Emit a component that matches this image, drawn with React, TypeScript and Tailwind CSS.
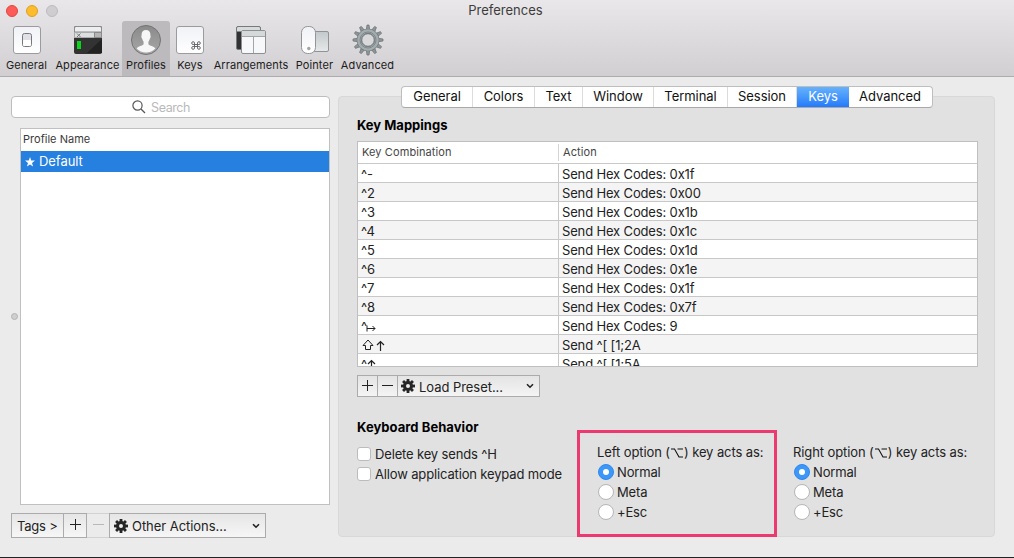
import type { ReactNode } from "react";
import clsx from "clsx";

const KeyGradient = ({ id }: { id: string }) => (
  <linearGradient id={id} x1="0" y1="0" x2="0" y2="1">
    <stop offset="0" stopColor="#f0f2f6" />
    <stop offset="1" stopColor="#ffffff" />
  </linearGradient>
);

const GeneralIcon = () => (
  <svg width="30" height="30" viewBox="0 0 30 30">
    <defs><KeyGradient id="general" /></defs>
    <rect x="1.5" y="1.5" width="27" height="27" rx="2.5" fill="url(#general)" stroke="#9b9b9d" />
    <rect x="10.5" y="8.5" width="9" height="13" rx="2" fill="#dfe1e6" stroke="#77777b" />
    <rect x="11" y="15" width="8" height="6" rx="1" fill="#fff" />
  </svg>
);

const AppearanceIcon = () => (
  <svg width="30" height="30" viewBox="0 0 30 30">
    <rect x="1" y="1" width="28" height="28" rx="2" fill="#333" />
    <path d="M1.5 7V3A1.5 1.5 0 0 1 3 1.5h24A1.5 1.5 0 0 1 28.5 3v4z" fill="#eceef0" stroke="#8c8c8e" />
    <rect x="1.5" y="7.5" width="20" height="5" fill="#dcdfe0" stroke="#a9abac" />
    <rect x="21.5" y="7.5" width="7" height="5" fill="#b3b5b6" stroke="#8a8a8a" />
    <path d="M4 8.500l3.500 3.500M7.500 8.500L4 12" stroke="#777" />
    <rect x="4" y="16" width="4" height="8" fill="#0bd51b" />
    <path d="M29 14v14H14z" fill="#222" />
  </svg>
);

const ProfilesIcon = () => (
  <svg width="32" height="32" viewBox="0 0 32 32">
    <defs>
      <linearGradient id="disc" x1="0" y1="0" x2="0" y2="1">
        <stop offset="0" stopColor="#8a8a8a" />
        <stop offset="1" stopColor="#a8a8a8" />
      </linearGradient>
    </defs>
    <circle cx="16" cy="16" r="14.500" fill="url(#disc)" stroke="#747474" />
    <path
      d="M16 6c-3 0-4.600 2-4.400 5 0 1-.4 1.200-.2 2.200.2 1 .7 1.100.9 1.800.3 1.400.8 2 1.300 2.600v2.600c-1 1.600-5.500 1.700-7 4.300a13 13 0 0 0 18.800 0c-1.500-2.600-6-2.700-7-4.300v-2.600c.5-.6 1-1.200 1.300-2.600.2-.7.7-.8.9-1.800.2-1-.2-1.200-.2-2.200.2-3-1.400-5-4.400-5z"
      fill="#f7f7f7"
    />
  </svg>
);

const KeysIcon = () => (
  <svg width="30" height="30" viewBox="0 0 30 30">
    <defs><KeyGradient id="keys" /></defs>
    <rect x="1.5" y="1.5" width="27" height="27" rx="2.5" fill="url(#keys)" stroke="#9b9b9d" />
    <path
      d="M19.500 19.500v-1.400a1.400 1.400 0 1 0-1.400 1.400h5.800a1.400 1.400 0 1 0-1.400-1.400v4.800a1.400 1.400 0 1 0 1.400-1.400h-5.800a1.400 1.400 0 1 0 1.400 1.400z"
      fill="none"
      stroke="#68686b"
    />
  </svg>
);

const ArrangementsIcon = () => (
  <svg width="32" height="30" viewBox="0 0 32 30">
    <rect x="1.5" y="1.5" width="24" height="23" rx="1.5" fill="#303234" stroke="#77797b" />
    <path d="M2 6.500V3a1 1 0 0 1 1-1h21a1 1 0 0 1 1 1v3.500z" fill="#d8dbdc" />
    <rect x="6.500" y="5.500" width="24" height="23" rx="1.500" fill="#f7f8fa" stroke="#8d8f91" />
    <path d="M7 11V7a1 1 0 0 1 1-1h21a1 1 0 0 1 1 1v4z" fill="#d5d9da" />
    <path d="M7 11.500h23M18.500 12v16" stroke="#a3a6a8" />
  </svg>
);

const PointerIcon = () => (
  <svg width="30" height="30" viewBox="0 0 30 30">
    <defs>
      <KeyGradient id="mouse" />
      <linearGradient id="pad" x1="0" y1="0" x2="0" y2="1">
        <stop offset="0" stopColor="#c3c8ca" />
        <stop offset="1" stopColor="#e6e9ea" />
      </linearGradient>
    </defs>
    <rect x="13.500" y="6.500" width="15" height="20" rx="1.500" fill="url(#pad)" stroke="#8f9396" />
    <rect x="1.500" y="1.500" width="14" height="27" rx="6" fill="url(#mouse)" stroke="#929496" />
    <circle cx="8.800" cy="23.500" r="1.700" fill="#a2a4a6" />
  </svg>
);

const teeth = [0, 30, 60, 90, 120, 150, 180, 210, 240, 270, 300, 330];

const AdvancedIcon = () => (
  <svg width="32" height="32" viewBox="0 0 32 32">
    {teeth.map((a) => (
      <path key={a} d="M14.300 5.500L15 1h2l.7 4.500z" fill="#8f9698" stroke="#707779" strokeWidth="0.800" transform={`rotate(${a} 16 16)`} />
    ))}
    <circle cx="16" cy="16" r="8.800" fill="none" stroke="#737b7d" strokeWidth="5" />
    <circle cx="16" cy="16" r="8.800" fill="none" stroke="#a3acae" strokeWidth="3.800" />
    <circle cx="16" cy="16" r="8" fill="none" stroke="#7f888a" strokeWidth="1" />
    <circle cx="16" cy="16" r="6.300" fill="#d9d9dc" stroke="#6c7375" />
  </svg>
);

const GearGlyph = () => (
  <svg width="14" height="14" viewBox="0 0 14 14" className="shrink-0">
    {[0, 45, 90, 135, 180, 225, 270, 315].map((a) => (
      <rect key={a} x="5.600" y="0" width="2.800" height="4" fill="#262626" transform={`rotate(${a} 7 7)`} />
    ))}
    <circle cx="7" cy="7" r="3.500" fill="none" stroke="#262626" strokeWidth="3" />
  </svg>
);

const Chevron = () => (
  <svg width="8" height="6" viewBox="0 0 8 6" className="ml-auto shrink-0">
    <path d="M1 1.200l3 3 3-3" fill="none" stroke="#222" strokeWidth="1.600" />
  </svg>
);

const Plus = () => (
  <svg width="11" height="11" viewBox="0 0 11 11">
    <path d="M5.500 0v11M0 5.500h11" stroke="#222" />
  </svg>
);

const Minus = ({ color = "#222" }: { color?: string }) => (
  <svg width="11" height="11" viewBox="0 0 11 11">
    <path d="M0 5.500h11" stroke={color} />
  </svg>
);

const toolbar = [
  { label: "General", width: "w-[53px]", icon: <GeneralIcon /> },
  { label: "Appearance", width: "w-[69px]", icon: <AppearanceIcon /> },
  { label: "Profiles", width: "w-12", icon: <ProfilesIcon />, active: true },
  { label: "Keys", width: "w-10", icon: <KeysIcon /> },
  { label: "Arrangements", width: "w-[82px]", icon: <ArrangementsIcon /> },
  { label: "Pointer", width: "w-[45px]", icon: <PointerIcon /> },
  { label: "Advanced", width: "w-[61px]", icon: <AdvancedIcon /> },
];

const tabs = [
  { label: "General", width: "w-[71px]" },
  { label: "Colors", width: "w-[62px]" },
  { label: "Text", width: "w-12" },
  { label: "Window", width: "w-[71px]" },
  { label: "Terminal", width: "w-[74px]" },
  { label: "Session", width: "w-[69px]" },
  { label: "Keys", width: "w-[52px]", active: true },
  { label: "Advanced", width: "w-[82px]" },
];

const Shift = () => (
  <svg width="12" height="12" viewBox="0 0 12 12" className="mr-0.5 ml-px">
    <path d="M6 1l5 5.500H8.500v4h-5v-4H1z" fill="none" stroke="#222" />
  </svg>
);

const Up = () => (
  <svg width="9" height="11" viewBox="0 0 9 11">
    <path d="M4.500 11V1.500M1 5l3.500-3.500L8 5" fill="none" stroke="#222" strokeWidth="1.200" />
  </svg>
);

const TabKey = () => (
  <svg width="10" height="7" viewBox="0 0 10 7" className="mt-1 -ml-px">
    <path d="M1 .5v6M1 3.500h8M6.500 1L9 3.500 6.500 6" fill="none" stroke="#222" />
  </svg>
);

const mappings: { keys: ReactNode; action: string }[] = [
  { keys: "^-", action: "Send Hex Codes: 0x1f" },
  { keys: "^2", action: "Send Hex Codes: 0x00" },
  { keys: "^3", action: "Send Hex Codes: 0x1b" },
  { keys: "^4", action: "Send Hex Codes: 0x1c" },
  { keys: "^5", action: "Send Hex Codes: 0x1d" },
  { keys: "^6", action: "Send Hex Codes: 0x1e" },
  { keys: "^7", action: "Send Hex Codes: 0x1f" },
  { keys: "^8", action: "Send Hex Codes: 0x7f" },
  { keys: <>^<TabKey /></>, action: "Send Hex Codes: 9" },
  { keys: <><Shift /><Up /></>, action: "Send ^[ [1;2A" },
  { keys: <>^<Up /></>, action: "Send ^[ [1;5A" },
];

const Toolbar = () => (
  <header className="h-[77px] border-b border-[#aeacae] bg-linear-to-b from-[#e9e7e9] to-[#d1cfd1]">
    <div className="grid h-[21px] grid-cols-[1fr_auto_1fr] items-center">
      <div className="flex gap-2 pl-1.5">
        <span className="size-3 rounded-full border border-[#e2463f] bg-[#fc5b57]" />
        <span className="size-3 rounded-full border border-[#dfa023] bg-[#fdbc2e]" />
        <span className="size-3 rounded-full border border-[#bdbbbd] bg-[#cfcdcf]" />
      </div>
      <h1 className="pr-[3px] pb-px text-[13px] leading-[19px] text-[#3c3c3c]">Preferences</h1>
    </div>
    <nav className="flex h-[55px]">
      {toolbar.map((t) => (
        <div key={t.label} className={clsx("flex flex-col items-center", t.width, t.active && "rounded-t-[3px] bg-[#bcbabc]")}>
          <div className="flex h-[38px] items-center justify-center">{t.icon}</div>
          <span className="text-[11px] leading-[13px] tracking-[0.08px] whitespace-nowrap text-[#1c1c1c]">{t.label}</span>
        </div>
      ))}
    </nav>
  </header>
);

const ProfileList = () => (
  <aside className="w-[330px] pt-[19px] pl-[11px]">
    <div className="flex h-[22px] items-center justify-center rounded border border-[#bdbdbd] bg-white pr-[19px] text-[12.5px] tracking-[-0.45px] text-[#b9b9b9]">
      <svg width="14" height="14" viewBox="0 0 14 14" className="mr-[5px]">
        <circle cx="5.500" cy="5.500" r="4.600" fill="none" stroke="#555" strokeWidth="1.200" />
        <path d="M9 9l4 4" stroke="#555" strokeWidth="1.300" />
      </svg>
      <span className="pt-0.5">Search</span>
    </div>
    <div className="mt-[10px] flex">
      <div className="flex w-[9px] items-center">
        <span className="size-[7px] rounded-full border border-[#b3b3b3] bg-[#cfcfcf]" />
      </div>
      <div className="h-[377px] flex-1 border border-[#c0c0c0] bg-white">
        <div className="h-[22px] pl-0.5 text-[11px] leading-[21px] tracking-[0.02px] text-[#3a3a3a]">Profile Name</div>
        <div className="h-[21px] bg-[#2680df] pl-1 text-[13px] leading-[21px] tracking-[-0.05px] text-white">
          <svg width="10" height="10" viewBox="0 0 10 10" className="mr-1 inline-block align-[-1px]">
            <path d="M5 0l1.250 3.600H10L7 5.900 8.100 9.600 5 7.400 1.900 9.600 3 5.900 0 3.600h3.750z" fill="#fff" />
          </svg>
          Default
        </div>
      </div>
    </div>
    <div className="mt-2 flex h-[25px] text-[13px] tracking-[-0.05px] text-[#222]">
      <div className="flex w-[53px] items-center border border-[#ababab] bg-linear-to-b from-[#e6e6e6] to-[#f6f6f6] pt-0.5 pl-[5px] tracking-[-0.2px] whitespace-nowrap">
        Tags &gt;
      </div>
      <div className="flex w-[23px] items-center justify-center border-y border-r border-[#ababab] bg-linear-to-b from-[#e6e6e6] to-[#f6f6f6] pb-0.5"><Plus /></div>
      <div className="flex w-[22px] items-center justify-center border-y border-[#d2d2d2] pb-0.5"><Minus color="#b8b8b8" /></div>
      <div className="flex w-[157px] items-center border border-[#ababab] bg-linear-to-b from-[#e6e6e6] to-[#f6f6f6] pr-[5px] pl-1 whitespace-nowrap">
        <GearGlyph />
        <span className="ml-1 pt-0.5">Other Actions...</span>
        <Chevron />
      </div>
    </div>
  </aside>
);

const KeyMappings = () => (
  <section className="pl-[18px]">
    <h2 className="h-[33px] pt-[9px] text-[13px] leading-4 font-bold text-black">Key Mappings</h2>
    <div className="h-[226px] w-[621px] overflow-hidden border border-[#bfbfbf] bg-white">
      <div className="flex h-[22px] border-b border-[#cacaca] text-[11px] tracking-[0.1px] text-[#444]">
        <div className="my-0.5 w-[201px] border-r border-[#d4d4d4] pl-1 leading-[17px]">Key Combination</div>
        <div className="pl-1 leading-[21px]">Action</div>
      </div>
      {mappings.map((m, i) => (
        <div key={i} className={clsx("flex h-[19px] border-b border-[#c8c8c8] text-[13px] leading-[21px] tracking-[-0.15px] text-[#222]", i % 2 === 1 && "bg-[#f4f4f4]")}>
          <div className="flex w-[201px] items-center border-r border-[#c8c8c8] pt-0.5 pl-[3px]">{m.keys}</div>
          <div className="pl-[3px]">{m.action}</div>
        </div>
      ))}
    </div>
    <div className="mt-2 flex h-[22px] text-[13px] tracking-[-0.05px] text-[#222]">
      <div className="flex w-[21px] items-center justify-center border border-[#ababab] bg-linear-to-b from-[#e4e4e4] to-[#f4f4f4] pb-0.5"><Plus /></div>
      <div className="flex w-[19px] items-center justify-center border-y border-[#ababab] bg-linear-to-b from-[#e4e4e4] to-[#f4f4f4] pb-0.5"><Minus /></div>
      <div className="flex w-[143px] items-center border border-[#ababab] bg-linear-to-b from-[#e4e4e4] to-[#f4f4f4] pr-[5px] pl-[3px] whitespace-nowrap">
        <GearGlyph />
        <span className="ml-1 pt-[3px]">Load Preset...</span>
        <Chevron />
      </div>
    </div>
  </section>
);

const Checkbox = ({ label }: { label: string }) => (
  <div className="flex h-5 items-center">
    <span className="mr-1 size-[14px] shrink-0 rounded-[3px] border border-[#bcbcbc] bg-white" />
    <span className="pt-px whitespace-nowrap">{label}</span>
  </div>
);

const OptionKey = () => (
  <svg width="14" height="10" viewBox="0 0 14 10" className="inline-block align-[-1px]">
    <path d="M1 1h3.500l4.500 8h4M7.500 1H13" fill="none" stroke="#111" strokeWidth="1.100" />
  </svg>
);

const OptionGroup = ({ side }: { side: string }) => (
  <div>
    <div className="h-5 leading-5 tracking-[-0.1px] whitespace-nowrap">
      {side} option (<OptionKey />) key acts as:
    </div>
    {["Normal", "Meta", "+Esc"].map((o, i) => (
      <div key={o} className="flex h-5 items-center">
        <span
          className={clsx(
            "mr-[3px] ml-px flex size-4 items-center justify-center rounded-full border",
            i === 0 ? "border-[#2f88ee] bg-[#3d97f8]" : "border-[#b5b5b5] bg-white",
          )}
        >
          {i === 0 && <span className="size-1.5 rounded-full bg-white" />}
        </span>
        <span className="pt-px">{o}</span>
      </div>
    ))}
  </div>
);

const KeyboardBehavior = () => (
  <section className="mt-[22px] flex pl-[18px] text-[13px] tracking-[-0.15px] text-[#222]">
    <div className="w-[220px]">
      <h2 className="h-[25px] leading-4 font-bold tracking-[0.05px] text-black">Keyboard Behavior</h2>
      <Checkbox label="Delete key sends ^H" />
      <Checkbox label="Allow application keypad mode" />
    </div>
    <div className="mt-[11px] h-[107px] w-[200px] border-[3px] border-[#ec3a71] pt-[9px] pl-[17px]">
      <OptionGroup side="Left" />
    </div>
    <div className="pt-[23px] pl-4">
      <OptionGroup side="Right" />
    </div>
  </section>
);

const App = () => (
  <div className="h-[558px] w-[1014px] overflow-hidden border-b border-[#222] bg-[#ebebeb] font-['Inter',sans-serif]">
    <Toolbar />
    <main className="flex">
      <ProfileList />
      <div className="mt-[19px] ml-2 h-[441px] w-[657px] rounded border border-[#d8d8d8] bg-[#e1e1e1]">
        <div className="relative -mt-[11px] ml-[62px] flex h-[22px] w-[532px] overflow-hidden rounded border border-[#bebebe] border-b-[#a9a9a9] bg-white text-[13px] leading-[19px] tracking-[-0.05px] text-[#111]">
          {tabs.map((t) => (
            <div key={t.label} className={clsx("text-center", t.width, t.active ? "bg-linear-to-b from-[#66b1fb] to-[#237bfb] text-white" : "border-r border-[#dcdcdc] last:border-r-0")}>
              {t.label}
            </div>
          ))}
        </div>
        <KeyMappings />
        <KeyboardBehavior />
      </div>
    </main>
  </div>
);

export default App;
